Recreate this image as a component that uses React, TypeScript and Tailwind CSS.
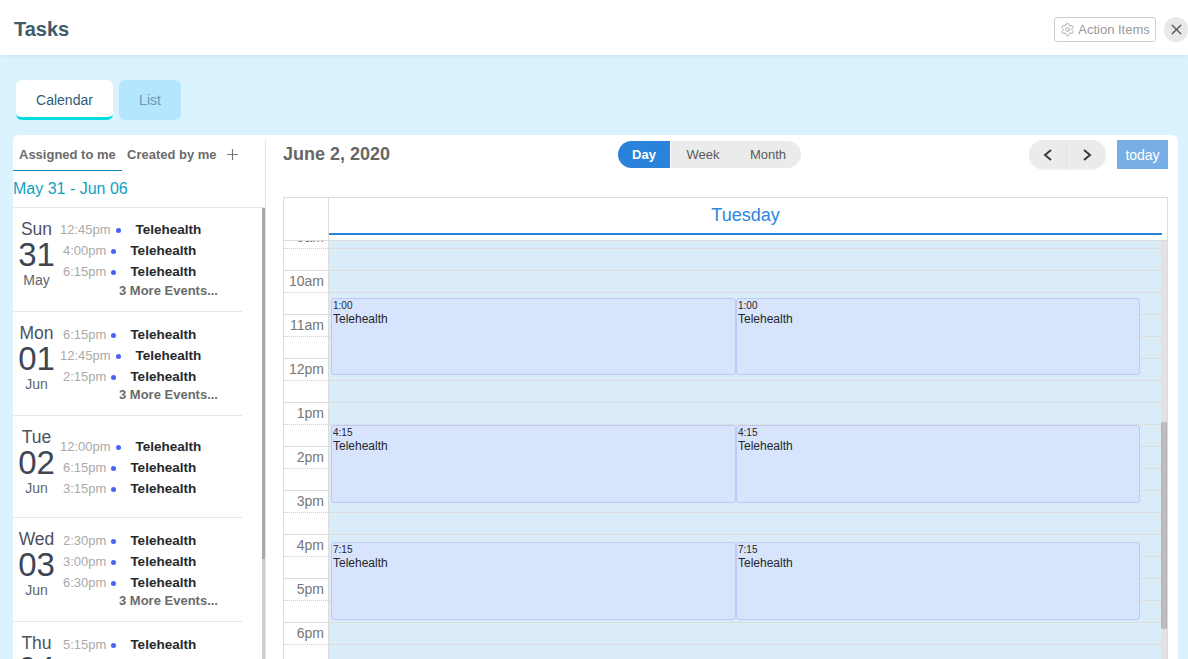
import React from "react";
import { Plus, Settings, X } from "lucide-react";

interface AgendaItem {
  time: string;
  long?: boolean;
}

interface DayGroup {
  day: string;
  date: string;
  month: string;
  height: string;
  rowsTop: string;
  moreTop?: string;
  items: AgendaItem[];
  more?: boolean;
}

const days: DayGroup[] = [
  {
    day: "Sun",
    date: "31",
    month: "May",
    height: "h-[104px]",
    rowsTop: "pt-[12px]",
    more: true,
    items: [{ time: "12:45pm", long: true }, { time: "4:00pm" }, { time: "6:15pm" }],
  },
  {
    day: "Mon",
    date: "01",
    month: "Jun",
    height: "h-[104px]",
    rowsTop: "pt-[13px]",
    moreTop: "-mt-[1px]",
    more: true,
    items: [{ time: "6:15pm" }, { time: "12:45pm", long: true }, { time: "2:15pm" }],
  },
  {
    day: "Tue",
    date: "02",
    month: "Jun",
    height: "h-[102px]",
    rowsTop: "pt-[21px]",
    items: [{ time: "12:00pm", long: true }, { time: "6:15pm" }, { time: "3:15pm" }],
  },
  {
    day: "Wed",
    date: "03",
    month: "Jun",
    height: "h-[104px]",
    rowsTop: "pt-[13px]",
    moreTop: "-mt-[1px]",
    more: true,
    items: [{ time: "2:30pm" }, { time: "3:00pm" }, { time: "6:30pm" }],
  },
  {
    day: "Thu",
    date: "04",
    month: "Jun",
    height: "h-[104px]",
    rowsTop: "pt-[13px]",
    items: [{ time: "5:15pm" }],
  },
];

const hours = ["9am", "10am", "11am", "12pm", "1pm", "2pm", "3pm", "4pm", "5pm", "6pm", "7pm"];

const events = [
  { time: "1:00", top: "top-[57px]", height: "h-[77px]" },
  { time: "4:15", top: "top-[184px]", height: "h-[78px]" },
  { time: "7:15", top: "top-[301px]", height: "h-[78px]" },
];

function AgendaDay({ group }: { group: DayGroup }) {
  return (
    <div className={`${group.height} w-[229px] border-b border-[#e6e6e6] flex shrink-0`}>
      <div className="w-[47px] shrink-0 flex flex-col items-center pt-[11px]">
        <div className="text-[17.5px] leading-[20px] text-[#4a5260]">{group.day}</div>
        <div className="text-[33px] leading-[32px] text-[#3d4654]">{group.date}</div>
        <div className="text-[14px] leading-[18px] text-[#5c6470]">{group.month}</div>
      </div>
      <div className={`flex-1 min-w-0 ${group.rowsTop}`}>
        {group.items.map((item, i) => (
          <div key={i} className="h-[21px] flex items-center whitespace-nowrap">
            <span className={`${item.long ? "" : "ml-[3px]"} text-[13px] leading-[18px] -mt-[2px] text-[#aaaaaa]`}>{item.time}</span>
            <span className="ml-[5px] w-[5px] h-[5px] rounded-full bg-[#4a62f5]" />
            <span className={`${item.long ? "ml-[15px]" : "ml-[14px]"} text-[13.5px] font-bold text-[#26282c]`}>Telehealth</span>
          </div>
        ))}
        {group.more && (
          <div className={`${group.moreTop ?? ""} text-[13px] leading-[16px] font-bold text-[#6b6b6b] pl-[59px] whitespace-nowrap`}>
            3 More Events...
          </div>
        )}
      </div>
    </div>
  );
}

function EventBox({ time, left, width, top, height }: { time: string; left: string; width: string; top: string; height: string }) {
  return (
    <div className={`absolute ${left} ${width} ${top} ${height} bg-[#d8e4fb]/95 border border-[#bccafa] rounded-[3px] px-[1px] text-[#23262b]`}>
      <div className="text-[10px] leading-[13px]">{time}</div>
      <div className="text-[12px] leading-[14px] -mt-[1px] pt-[1px]">Telehealth</div>
    </div>
  );
}

export default function App() {
  return (
    <div className="h-[659px] w-[1188px] overflow-hidden flex flex-col bg-[#daf3ff] font-['Liberation_Sans',Arial,sans-serif]">
      <header className="h-[55px] shrink-0 bg-white shadow-[0_1px_4px_rgba(0,0,0,0.08)] flex items-center justify-between pl-[14px] relative z-10">
        <h1 className="text-[20px] font-bold text-[#3f5a68] mt-[2px]">Tasks</h1>
        <div className="flex items-center gap-[8px] mt-[4px]">
          <button className="w-[102px] h-[25px] border border-[#cfcfcf] rounded-[3px] flex items-center justify-center gap-[3px] text-[13px] text-[#9a9a9a]">
            <Settings size={15} strokeWidth={1.3} />
            Action Items
          </button>
          <button className="w-[24px] h-[25px] bg-[#e8e8e8] rounded-full flex items-center justify-center text-[#5d5d5d]">
            <X size={17} strokeWidth={2} />
          </button>
        </div>
      </header>

      <div className="flex gap-[6px] pl-[16px] pt-[25px] h-[80px] shrink-0">
        <button className="w-[97px] h-[40px] pt-[3px] bg-white rounded-[6px] border-b-[3px] border-[#00dde0] text-[14px] text-[#2f5c7a]">
          Calendar
        </button>
        <button className="w-[62px] h-[40px] bg-[#b4e7ff] rounded-[6px] text-[14px] text-[#6a9ab5]">List</button>
      </div>

      <main className="flex-1 ml-[13px] w-[1165px] bg-white rounded-t-[6px] flex min-h-0">
        <aside className="w-[253px] border-r border-[#e3e3e3] flex flex-col mt-[5px] relative">
          <div className="flex items-start h-[32px] shrink-0">
            <div className="w-[109px] h-[31px] pb-[1px] border-b border-[#0a86b8] pl-[6px] flex items-center text-[13px] font-bold text-[#6b6b6b]">
              Assigned to me
            </div>
            <div className="ml-[5px] h-[30px] flex items-center text-[13px] font-bold text-[#6b6b6b]">Created by me</div>
            <Plus size={17} strokeWidth={1.6} className="ml-[7px] mt-[6px] text-[#777777]" />
          </div>
          <div className="h-[36px] shrink-0 text-[16px] text-[#12a0c0] pt-[5px] border-b border-[#e6e6e6]">May 31 - Jun 06</div>
          <div className="flex-1 flex flex-col overflow-hidden">
            {days.map((group) => (
              <AgendaDay key={group.day} group={group} />
            ))}
          </div>
          <div className="absolute right-0 top-[68px] bottom-0 w-[3px] bg-[#cfcfcf]">
            <div className="h-[351px] bg-[#a8a8a8]" />
          </div>
        </aside>

        <section className="flex-1 min-w-0 pl-[17px] pr-[10px] flex flex-col">
          <div className="h-[62px] shrink-0 flex items-start relative">
            <div className="text-[18px] font-bold text-[#666666] mt-[6px] w-[335px]">June 2, 2020</div>
            <div className="mt-[6px] flex h-[27px] w-[183px] bg-[#ebebeb] rounded-full overflow-hidden text-[13px]">
              <div className="w-[53px] bg-[#2b82db] border-r border-white text-white font-bold flex items-center justify-center">Day</div>
              <div className="w-[64px] text-[#5a5a5a] flex items-center justify-center">Week</div>
              <div className="w-[66px] text-[#5a5a5a] flex items-center justify-center">Month</div>
            </div>
            <div className="ml-auto mt-[5px] flex items-center gap-[11px]">
              <div className="flex w-[77px] h-[29px] bg-[#ebebeb] rounded-full text-[#3a3a3a] shadow-[0_1px_2px_rgba(0,0,0,0.05)]">
                <div className="w-[38px] flex items-center justify-center border-r border-[#e2e2e2]">
                  <svg width="10" height="12" viewBox="0 0 10 12" fill="none" stroke="currentColor" strokeWidth="2">
                    <polyline points="8,1 2,6 8,11" />
                  </svg>
                </div>
                <div className="flex-1 flex items-center justify-center">
                  <svg width="10" height="12" viewBox="0 0 10 12" fill="none" stroke="currentColor" strokeWidth="2">
                    <polyline points="2,1 8,6 2,11" />
                  </svg>
                </div>
              </div>
              <div className="w-[51px] h-[29px] pt-[2px] bg-[#78aee6] text-white text-[14px] font-medium flex items-center justify-center">today</div>
            </div>
          </div>

          <div className="flex-1 min-h-0 border border-[#dcdcdc] border-b-0 flex flex-col">
            <div className="h-[43px] shrink-0 flex border-b border-[#dcdcdc]">
              <div className="w-[45px] border-r border-[#dcdcdc]" />
              <div className="flex-1 pr-[5px]">
                <div className="h-[37px] border-b-2 border-[#2b82db] text-[18px] text-[#2b86e0] flex items-center justify-center w-[833px]">
                  Tuesday
                </div>
              </div>
            </div>
            <div className="flex-1 min-h-0 overflow-hidden relative flex">
              <div className="w-[45px] shrink-0 border-r border-[#dcdcdc] -mt-[15px]">
                {hours.map((h) => (
                  <div key={h} className="h-[44px] border-t border-[#dcdcdc]">
                    <div className="h-[22px] border-b border-dotted border-[#cfcfcf] text-[14px] text-[#777777] text-right pr-[4px] leading-[20px]">
                      {h}
                    </div>
                  </div>
                ))}
              </div>
              <div className="flex-1 bg-[#daecf8] -mt-[15px]">
                {hours.map((h) => (
                  <div key={h} className="h-[44px] border-t border-[#dcdcdc]">
                    <div className="h-[22px] border-b border-dotted border-[#d5d5d5]" />
                  </div>
                ))}
              </div>
              {events.map((ev) => (
                <React.Fragment key={ev.time}>
                  <EventBox time={ev.time} left="left-[47px]" width="w-[405px]" top={ev.top} height={ev.height} />
                  <EventBox time={ev.time} left="left-[452px]" width="w-[404px]" top={ev.top} height={ev.height} />
                </React.Fragment>
              ))}
              <div className="absolute right-0 top-0 bottom-0 w-[6px] bg-[#e3e3e3]">
                <div className="mt-[181px] h-[207px] bg-[#bdbdbd] rounded-[2px] border-x border-[#b4b4b4]" />
              </div>
            </div>
          </div>
        </section>
      </main>
    </div>
  );
}
